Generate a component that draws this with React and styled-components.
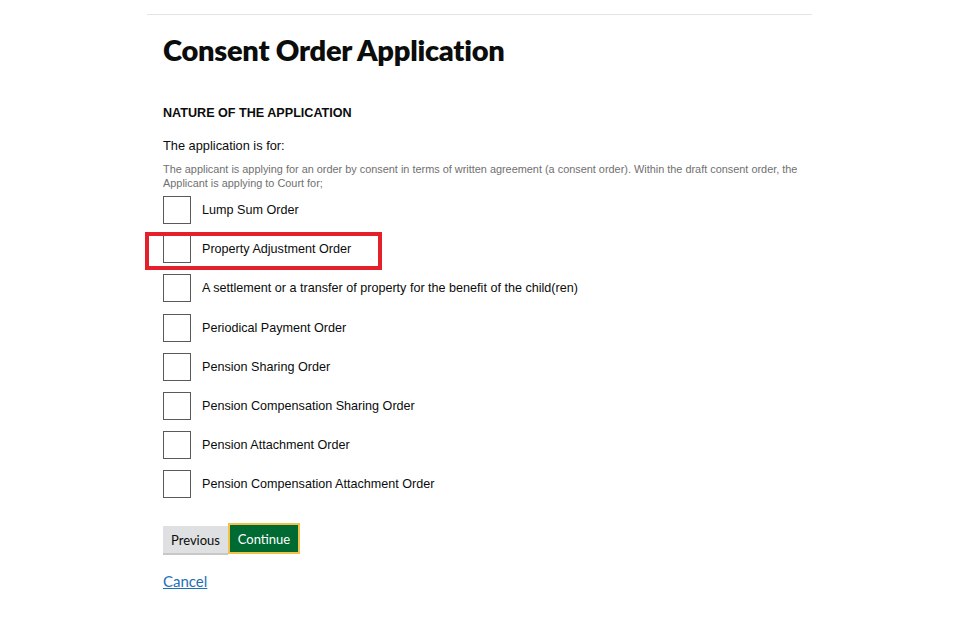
import React from "react";
import styled, { createGlobalStyle } from "styled-components";

const GlobalStyle = createGlobalStyle`
  html, body {
    margin: 0;
    padding: 0;
    background: #ffffff;
  }
  body {
    font-family: "Liberation Sans", Arial, sans-serif;
    color: #0b0c0c;
  }
`;

const Page = styled.div`
  width: 960px;
  height: 643px;
  padding-top: 14px;
  box-sizing: border-box;
`;

const Rule = styled.div`
  margin-left: 147px;
  width: 665px;
  height: 1px;
  background: #e4e4e4;
`;

const Main = styled.main`
  padding-left: 163px;
  padding-right: 140px;
`;

const Title = styled.h1`
  margin: 18px 0 0 0;
  font-family: Lato, "Open Sans", sans-serif;
  font-weight: 800;
  font-size: 29px;
  line-height: 34px;
  letter-spacing: -0.25px;
  color: #0b0c0c;
`;

const SectionHeading = styled.h2`
  margin: 38px 0 0 0;
  font-size: 12.6px;
  line-height: 16px;
  font-weight: 700;
  color: #0b0c0c;
`;

const Question = styled.p`
  margin: 17px 0 0 0;
  font-size: 12.8px;
  line-height: 16px;
`;

const Hint = styled.p`
  margin: 8px 0 0 0;
  font-size: 10.9px;
  line-height: 14px;
  color: #707070;
  max-width: 650px;
`;

const OptionList = styled.div`
  margin-top: 6px;
  display: flex;
  flex-direction: column;
  gap: 11.2px;
`;

const OptionWrap = styled.div`
  position: relative;
`;

const Highlight = styled.div`
  position: absolute;
  left: -18px;
  top: -3px;
  width: 237px;
  height: 38px;
  box-sizing: border-box;
  border: 4px solid #e4202b;
`;

const Option = styled.label`
  display: flex;
  align-items: center;
  gap: 11px;
  font-size: 12.6px;
  line-height: 16px;
  color: #0b0c0c;
`;

const Box = styled.span`
  width: 26px;
  height: 26px;
  border: 1px solid #5a5a5a;
  background: #fff;
  flex-shrink: 0;
`;

const Buttons = styled.div`
  margin-top: 25px;
  display: flex;
  align-items: flex-start;
`;

const Button = styled.button`
  font-family: Lato, "Open Sans", sans-serif;
  font-size: 13px;
  cursor: pointer;
  padding: 0;
  background: ${(p) => (p.primary ? "#006a33" : "#dee0e2")};
  color: ${(p) => (p.primary ? "#ffffff" : "#0b0c0c")};
  height: ${(p) => (p.primary ? "31px" : "27px")};
  width: ${(p) => (p.primary ? "72px" : "65px")};
  box-sizing: border-box;
  border: ${(p) => (p.primary ? "2px solid #f2c14a" : "none")};
  box-shadow: ${(p) => (p.primary ? "none" : "0 2px 0 #c5c7c9")};
  margin-top: ${(p) => (p.primary ? "0" : "3px")};
`;

const CancelLink = styled.a`
  display: inline-block;
  margin-top: 18px;
  font-family: Lato, "Open Sans", sans-serif;
  font-size: 15px;
  color: #1d70b8;
  text-decoration: underline;
`;

const options = [
  "Lump Sum Order",
  "Property Adjustment Order",
  "A settlement or a transfer of property for the benefit of the child(ren)",
  "Periodical Payment Order",
  "Pension Sharing Order",
  "Pension Compensation Sharing Order",
  "Pension Attachment Order",
  "Pension Compensation Attachment Order",
];

export default function App() {
  return (
    <Page>
      <GlobalStyle />
      <Rule />
      <Main>
        <Title>Consent Order Application</Title>
        <SectionHeading>NATURE OF THE APPLICATION</SectionHeading>
        <Question>The application is for:</Question>
        <Hint>
          The applicant is applying for an order by consent in terms of written agreement (a consent
          order). Within the draft consent order, the Applicant is applying to Court for;
        </Hint>
        <OptionList>
          {options.map((o, i) => (
            <OptionWrap key={o}>
              {i === 1 && <Highlight />}
              <Option>
                <Box />
                {o}
              </Option>
            </OptionWrap>
          ))}
        </OptionList>
        <Buttons>
          <Button>Previous</Button>
          <Button primary>Continue</Button>
        </Buttons>
        <CancelLink href="#">Cancel</CancelLink>
      </Main>
    </Page>
  );
}
